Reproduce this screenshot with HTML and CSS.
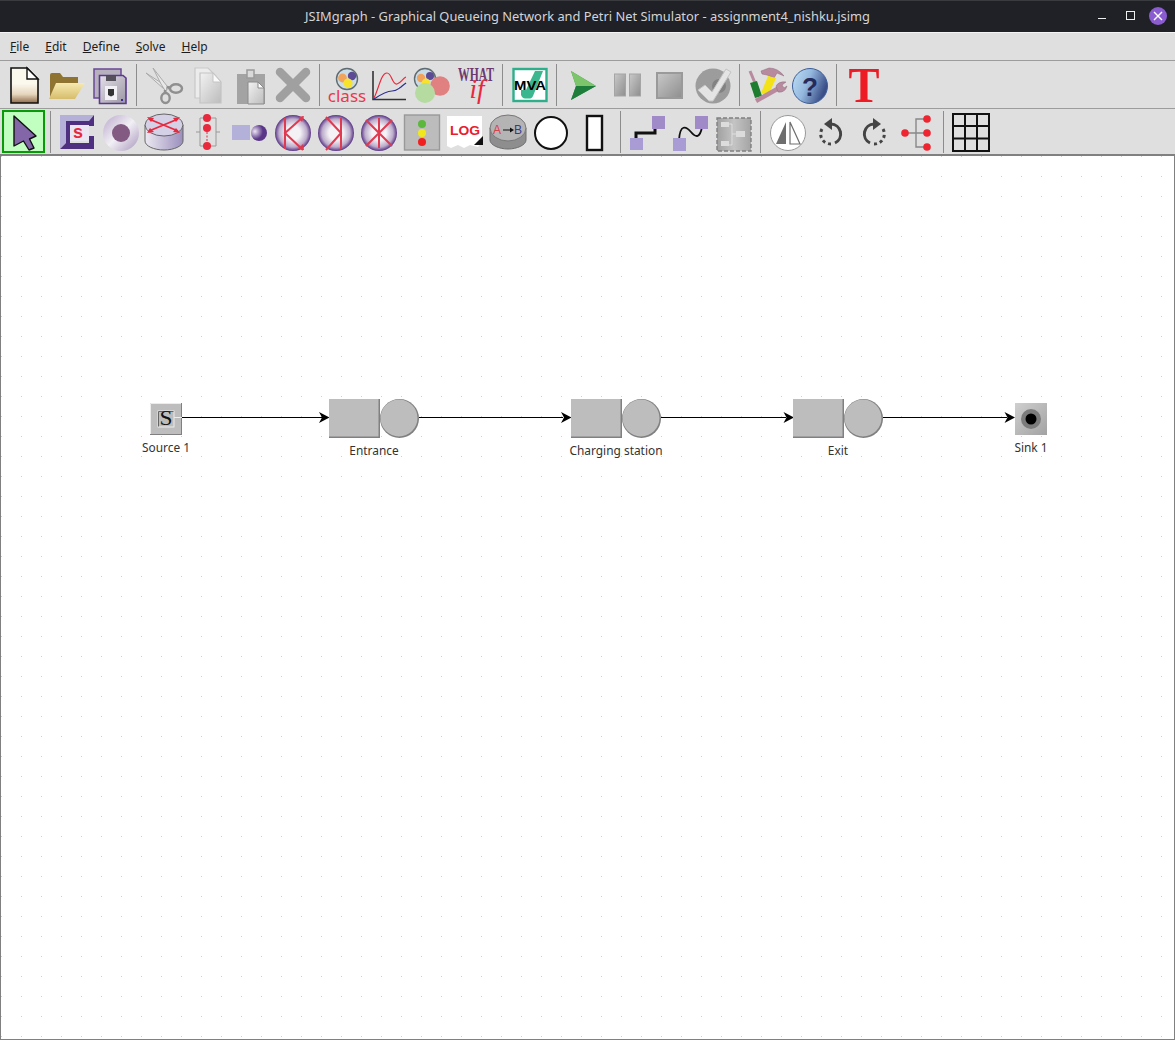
FILE: index.html
```html
<!DOCTYPE html>
<html lang="en">
<head>
  <meta charset="UTF-8">
  <title>JSIMgraph - Graphical Queueing Network and Petri Net Simulator</title>
  <link rel="stylesheet" href="styles.css">
</head>
<body>
<div class="window">
  <div class="titlebar">
    <span class="title">JSIMgraph - Graphical Queueing Network and Petri Net Simulator - assignment4_nishku.jsimg</span>
    <div class="controls">
      <svg width="14" height="14" viewBox="0 0 14 14"><path d="M2 9.500H10" stroke="#eee" stroke-width="1"/></svg>
      <svg width="14" height="14" viewBox="0 0 14 14"><rect x="2.500" y="2.500" width="8" height="8" fill="none" stroke="#eee"/></svg>
      <div class="close"><svg width="10" height="10" viewBox="0 0 10 10"><path d="M1 1L9 9M9 1L1 9" stroke="#fff" stroke-width="1.4"/></svg></div>
    </div>
  </div>

  <div class="menubar">
    <span class="menu"><u>F</u>ile</span>
    <span class="menu"><u>E</u>dit</span>
    <span class="menu"><u>D</u>efine</span>
    <span class="menu"><u>S</u>olve</span>
    <span class="menu"><u>H</u>elp</span>
  </div>

  <!-- main toolbar -->
  <div class="toolbar">
    <div class="tool"><svg width="40" height="40" viewBox="0 0 40 40">
      <defs>
        <linearGradient id="paper" x1="0" y1="0" x2="0" y2="1"><stop offset="0.45" stop-color="#fbf8ee"/><stop offset="0.75" stop-color="#e6d6bd"/><stop offset="1" stop-color="#8f6c4a"/></linearGradient>
        <linearGradient id="gold" x1="0" y1="0" x2="0" y2="1"><stop offset="0" stop-color="#f6eab0"/><stop offset="1" stop-color="#d6bd6c"/></linearGradient>
        <linearGradient id="greyfade" x1="0" y1="0" x2="1" y2="1"><stop offset="0" stop-color="#f2f2f2"/><stop offset="1" stop-color="#bcbcbc"/></linearGradient>
        <linearGradient id="greyflat" x1="0" y1="0" x2="1" y2="1"><stop offset="0" stop-color="#c9c9c9"/><stop offset="1" stop-color="#8e8e8e"/></linearGradient>
        <linearGradient id="floppy" x1="0" y1="0" x2="1" y2="1"><stop offset="0" stop-color="#e4e0ea"/><stop offset="1" stop-color="#9a95a2"/></linearGradient>
        <linearGradient id="help" x1="0" y1="0" x2="1" y2="0.4"><stop offset="0" stop-color="#c0e0f6"/><stop offset="0.5" stop-color="#94b8de"/><stop offset="1" stop-color="#3a4f88"/></linearGradient>
        <linearGradient id="ring" x1="0" y1="0" x2="1" y2="1"><stop offset="0" stop-color="#b9a8cc"/><stop offset="0.5" stop-color="#f2eff5"/><stop offset="1" stop-color="#a896bc"/></linearGradient>
        <linearGradient id="drum" x1="0" y1="0" x2="1" y2="0"><stop offset="0" stop-color="#ece9f2"/><stop offset="1" stop-color="#9b8fbc"/></linearGradient>
        <linearGradient id="block" x1="0" y1="0" x2="1" y2="0"><stop offset="0" stop-color="#a0a0a0"/><stop offset="0.5" stop-color="#c4c4c4"/><stop offset="1" stop-color="#a4a4a4"/></linearGradient>
        <linearGradient id="sinkbox" x1="0" y1="0" x2="1" y2="1"><stop offset="0" stop-color="#cfcfcf"/><stop offset="1" stop-color="#a2a2a2"/></linearGradient>
        <radialGradient id="orb"><stop offset="0.4" stop-color="#f4f2f5"/><stop offset="0.78" stop-color="#bcaccb"/><stop offset="1" stop-color="#5a3585"/></radialGradient>
        <radialGradient id="ball" cx="0.25" cy="0.4"><stop offset="0" stop-color="#ece6f2"/><stop offset="1" stop-color="#5a3688"/></radialGradient>
        <pattern id="dots" x="1" y="156" width="20" height="20" patternUnits="userSpaceOnUse"><rect width="1" height="1" fill="#cfcfcf"/></pattern>
      </defs>
      <path d="M7 3H23L34 14V38H7Z" fill="url(#paper)" stroke="#111" stroke-width="1.6"/>
      <path d="M23 3V14H34Z" fill="#fff" stroke="#111" stroke-width="1.4"/>
    </svg></div>
    <div class="tool"><svg width="40" height="40" viewBox="0 0 40 40">
      <path d="M3 34L3 10Q3 8 5 8H13L16 12H31V20H10Z" fill="#8f7431"/>
      <path d="M9 18H38L28 34H2Z" fill="url(#gold)"/>
    </svg></div>
    <div class="tool"><svg width="40" height="40" viewBox="0 0 40 40">
      <path d="M4 4H31V33H4Z" fill="#b6b1bd" stroke="#6a4896" stroke-width="1.5"/>
      <path d="M9.500 10.500H33L36 13V38.500H9.500Z" fill="url(#floppy)" stroke="#5a3a8c" stroke-width="1.6"/>
      <rect x="16" y="11" width="10" height="5" fill="#55505a"/>
      <rect x="15" y="21" width="12" height="14" fill="#f2f0f4"/>
      <path d="M18 24H24V30L21 31.500L18 30Z" fill="#333"/>
      <rect x="31" y="34" width="2" height="2" fill="#3c2a96"/>
    </svg></div>
    <div class="sep"></div>
    <div class="tool"><svg width="40" height="40" viewBox="0 0 40 40">
      <path d="M2 8L22 21L25 24L20 24Z" fill="#e8e8e8" stroke="#aaa"/>
      <path d="M9 3L23 21L22 27L17 19Z" fill="#e8e8e8" stroke="#aaa"/>
      <path d="M23 22L27 23M21 25L21 29" stroke="#8f8f8f" stroke-width="2.4"/>
      <ellipse cx="32" cy="23.500" rx="6" ry="4.300" fill="none" stroke="#8f8f8f" stroke-width="2.400"/>
      <ellipse cx="21.500" cy="33" rx="4.200" ry="5" fill="none" stroke="#8f8f8f" stroke-width="2.400"/>
    </svg></div>
    <div class="tool"><svg width="40" height="40" viewBox="0 0 40 40">
      <path d="M8 3H21L29 11V33H8Z" fill="#ececec" stroke="#c9c9c9" stroke-width="1.2"/>
      <path d="M13 8H26L34 17V38H13Z" fill="url(#greyfade)" stroke="#c4c4c4" stroke-width="1.2"/>
      <path d="M26 8V17H34Z" fill="#fafafa" stroke="#c4c4c4"/>
    </svg></div>
    <div class="tool"><svg width="40" height="40" viewBox="0 0 40 40">
      <rect x="7" y="9" width="28" height="30" fill="#a3a3a3"/>
      <rect x="17" y="5" width="7" height="8" fill="#d9d9d9" stroke="#9a9a9a" stroke-width="1.5"/>
      <path d="M18 17H28L34 23V39H18Z" fill="url(#greyfade)" stroke="#8a8a8a"/>
      <path d="M28 17V23H34Z" fill="#fff" stroke="#8a8a8a"/>
    </svg></div>
    <div class="tool"><svg width="40" height="40" viewBox="0 0 40 40">
      <path d="M7 7L33 33M33 7L7 33" stroke="#a0a0a0" stroke-width="8.500" stroke-linecap="round"/>
    </svg></div>
    <div class="sep"></div>
    <div class="tool"><svg width="40" height="40" viewBox="0 0 40 40">
      <circle cx="20" cy="14" r="10.500" fill="#c9dce6" stroke="#5e6b70" stroke-width="1.400"/>
      <circle cx="15.500" cy="13" r="4.400" fill="#f2a35b"/>
      <circle cx="25" cy="11" r="4.200" fill="#5d4a94"/>
      <circle cx="21" cy="18" r="4.600" fill="#f7e22c"/>
      <text x="20" y="37" class="tx-class">class</text>
    </svg></div>
    <div class="tool"><svg width="40" height="40" viewBox="0 0 40 40">
      <path d="M3 6V34.500H36" fill="none" stroke="#333" stroke-width="1.600"/>
      <path d="M4 33C9 23 11 8 17 8C22 8 22 20 27 19C31 18 33 13 36 12" fill="none" stroke="#e8283c" stroke-width="1.200"/>
      <path d="M4 34C13 28 18 26 22 26C27 26 28 24 31 22C33 20 35 19 36 18" fill="none" stroke="#2c2f8c" stroke-width="1.200"/>
    </svg></div>
    <div class="tool"><svg width="40" height="40" viewBox="0 0 40 40">
      <circle cx="12" cy="14" r="10.500" fill="#c9dce6" stroke="#5e6b70" stroke-width="1.400"/>
      <circle cx="8" cy="13" r="4.200" fill="#f2a35b"/>
      <circle cx="17" cy="11" r="4" fill="#5d4a94"/>
      <circle cx="13" cy="18" r="4.400" fill="#f7e22c"/>
      <circle cx="27" cy="21" r="9.800" fill="#e08080"/>
      <circle cx="12" cy="28" r="10" fill="#b5dba0"/>
    </svg></div>
    <div class="tool"><svg width="40" height="40" viewBox="0 0 40 40">
      <text x="20" y="16" class="tx-what" textLength="36" lengthAdjust="spacingAndGlyphs">WHAT</text>
      <text x="21" y="33" class="tx-if">if</text>
    </svg></div>
    <div class="sep"></div>
    <div class="tool"><svg width="40" height="40" viewBox="0 0 40 40">
      <rect x="3.500" y="4" width="33" height="32" fill="#fff" stroke="#2fae8c" stroke-width="2.400"/>
      <path d="M11 25H16L25 6H33L23 31C22 33 21 33.500 19 33.500H15C13 33.500 12 32 11 30Z" fill="#3bb78f"/>
      <text x="20" y="25" class="tx-mva" textLength="32" lengthAdjust="spacingAndGlyphs">MVA</text>
    </svg></div>
    <div class="sep"></div>
    <div class="tool"><svg width="40" height="40" viewBox="0 0 40 40">
      <path d="M7 6L32 21L7 35L12 21Z" fill="#2f9a4c"/>
      <path d="M7 6L32 21H12Z" fill="#7cc56a"/>
      <path d="M7 35L12 21H32Z" fill="#1f7d3c"/>
    </svg></div>
    <div class="tool"><svg width="40" height="40" viewBox="0 0 40 40">
      <rect x="7.500" y="9" width="11" height="22" fill="url(#greyflat)" stroke="#a5a5a5"/>
      <rect x="22.500" y="9" width="11" height="22" fill="url(#greyflat)" stroke="#a5a5a5"/>
    </svg></div>
    <div class="tool"><svg width="40" height="40" viewBox="0 0 40 40">
      <rect x="7" y="8" width="25" height="25" fill="url(#greyflat)" stroke="#9a9a9a" stroke-width="2"/>
    </svg></div>
    <div class="tool"><svg width="40" height="40" viewBox="0 0 40 40">
      <circle cx="20" cy="21" r="17.500" fill="#9c9c9c"/>
      <circle cx="26" cy="21" r="7" fill="#828282"/>
      <path d="M5 25L12 20L19 27L33 4L38 7L20 36H16Z" fill="#e4e4e4" stroke="#c4c4c4"/>
    </svg></div>
    <div class="sep"></div>
    <div class="tool"><svg width="40" height="40" viewBox="0 0 40 40">
      <path d="M3 6L8 18" stroke="#b88a9e" stroke-width="3"/>
      <path d="M3 18L10 16L15 31L8 33Z" fill="#1e7d2e"/>
      <path d="M14 6L22 3Q31 3 37 11L30 8L27 13L20 10L15 9Z" fill="#b88a9e" stroke="#8c6a7e" stroke-width="0.500"/>
      <path d="M21 11L29 13L21 31L14 28Z" fill="#f4e218"/>
      <path d="M9 36L32 23" stroke="#b88a9e" stroke-width="4.500"/>
      <path d="M29 21Q32 16 39 17L35 20L37 23L40 21Q38 28 31 27Z" fill="#b88a9e" stroke="#8c6a7e" stroke-width="0.500"/>
    </svg></div>
    <div class="tool"><svg width="40" height="40" viewBox="0 0 40 40">
      <circle cx="20" cy="21" r="17.500" fill="url(#help)" stroke="#3c5f9a" stroke-width="1"/>
      <text x="20" y="31" class="tx-help">?</text>
    </svg></div>
    <div class="sep"></div>
    <div class="tool"><svg width="40" height="40" viewBox="0 0 40 40">
      <text x="20" y="37" class="tx-t" textLength="31" lengthAdjust="spacingAndGlyphs">T</text>
    </svg></div>
  </div>

  <!-- element toolbar -->
  <div class="toolbar second">
    <div class="tool selected"><svg width="40" height="40" viewBox="0 0 40 40">
      <path d="M10 4L32 24L25.500 27L30 36L25 38L19.500 29L10 34Z" fill="#8266a8" stroke="#111" stroke-width="1.400" stroke-linejoin="round"/>
    </svg></div>
    <div class="sep"></div>
    <div class="tool"><svg width="40" height="40" viewBox="0 0 40 40">
      <path d="M2 3H36L31 9H8V31L2 37Z" fill="#b5b0d8"/>
      <path d="M2 37L8 31H31V24H36V37ZM31 9L36 3V14H31Z" fill="#4e2f80"/>
      <path d="M8 9H31V13H12V31H8Z" fill="#4e2f80"/>
      <rect x="12" y="13" width="19" height="16" fill="#e9e6f2"/>
      <rect x="31" y="14" width="5" height="10" fill="#dfdfdf"/>
      <text x="20" y="26" class="tx-s">s</text>
    </svg></div>
    <div class="tool"><svg width="40" height="40" viewBox="0 0 40 40">
      <circle cx="20" cy="21" r="18" fill="url(#ring)"/>
      <circle cx="20" cy="21" r="9" fill="#825a82"/>
    </svg></div>
    <div class="tool"><svg width="40" height="40" viewBox="0 0 40 40">
      <path d="M1 13V29C1 34 10 38 20 38C30 38 39 34 39 29V13Z" fill="url(#drum)" stroke="#666"/>
      <ellipse cx="20" cy="13" rx="19" ry="11" fill="#d4d0e6" stroke="#666"/>
      <path d="M5 7L34 19M5 19L34 7" stroke="#e8283c" stroke-width="1.800"/>
      <path d="M3 5L10 6L7 10ZM36 21L29 20L32 16ZM3 21L6 16L10 20ZM36 5L29 6L32 10Z" fill="#e8283c"/>
    </svg></div>
    <div class="tool"><svg width="40" height="40" viewBox="0 0 40 40">
      <path d="M17 6H13V34H17M23 6H29V34H23M13 20H9M29 20H33" fill="none" stroke="#999" stroke-width="1"/>
      <path d="M20 20V30" stroke="#e8283c" stroke-dasharray="2 1.500"/>
      <circle cx="20" cy="6" r="4" fill="#e8283c"/>
      <circle cx="20" cy="16" r="4" fill="#e8283c"/>
      <circle cx="20" cy="34" r="4" fill="#e8283c"/>
    </svg></div>
    <div class="tool"><svg width="40" height="40" viewBox="0 0 40 40">
      <rect x="2" y="13" width="18" height="15" fill="#b3b0da"/>
      <circle cx="29" cy="21" r="8" fill="url(#ball)"/>
    </svg></div>
    <div class="tool"><svg width="40" height="40" viewBox="0 0 40 40">
      <circle cx="20" cy="21" r="18" fill="url(#orb)"/>
      <path d="M12 6V37M30 5L12 21L30 38" fill="none" stroke="#e03a50" stroke-width="2"/>
      <path d="M25 5L31 4L29 10ZM25 37L31 38L30 32Z" fill="#e03a50"/>
    </svg></div>
    <div class="tool"><svg width="40" height="40" viewBox="0 0 40 40">
      <circle cx="20" cy="21" r="18" fill="url(#orb)"/>
      <path d="M25 6V37M10 5L25 21L10 38" fill="none" stroke="#e03a50" stroke-width="2"/>
    </svg></div>
    <div class="tool"><svg width="40" height="40" viewBox="0 0 40 40">
      <circle cx="20" cy="21" r="18" fill="url(#orb)"/>
      <path d="M7 8L33 34M33 8L7 34M20 6V36" stroke="#e03a50" stroke-width="2"/>
    </svg></div>
    <div class="tool"><svg width="40" height="40" viewBox="0 0 40 40">
      <rect x="2.500" y="3" width="35" height="35" fill="#bcbcbc" stroke="#999" stroke-width="1.400"/>
      <circle cx="20" cy="12" r="4" fill="#5cb83c"/>
      <circle cx="20" cy="21" r="4" fill="#f0e81c"/>
      <circle cx="20" cy="30" r="4" fill="#f02020"/>
    </svg></div>
    <div class="tool"><svg width="40" height="40" viewBox="0 0 40 40">
      <path d="M2 4H37V30L33 35L25 33L19 36L13 33L6 36L2 34Z" fill="#fff"/>
      <text x="20" y="23" class="tx-log" textLength="30" lengthAdjust="spacingAndGlyphs">LOG</text>
      <path d="M38 24V33H29Z" fill="#111"/>
    </svg></div>
    <div class="tool"><svg width="40" height="40" viewBox="0 0 40 40">
      <path d="M2 16V28C2 33 11 37 20 37C29 37 38 33 38 28V16Z" fill="#8e8e8e" stroke="#6e6e6e"/>
      <ellipse cx="20" cy="16" rx="18" ry="13" fill="#b4b4b4" stroke="#777"/>
      <text x="9" y="22" class="tx-a">A</text>
      <path d="M15 18H24" stroke="#111"/>
      <path d="M26 18L22 15.500V20.500Z" fill="#111"/>
      <text x="26" y="22" class="tx-b">B</text>
    </svg></div>
    <div class="tool"><svg width="40" height="40" viewBox="0 0 40 40">
      <circle cx="20" cy="21" r="16" fill="#fff" stroke="#111" stroke-width="2"/>
    </svg></div>
    <div class="tool"><svg width="40" height="40" viewBox="0 0 40 40">
      <rect x="13" y="4" width="15" height="34" fill="#fff" stroke="#111" stroke-width="2.400"/>
    </svg></div>
    <div class="sep"></div>
    <div class="tool"><svg width="40" height="40" viewBox="0 0 40 40">
      <path d="M8 28V21H27V14" fill="none" stroke="#111" stroke-width="3"/>
      <rect x="24" y="4" width="13" height="13" fill="#a08ac8"/>
      <rect x="2" y="26" width="13" height="12" fill="#a99bd4"/>
    </svg></div>
    <div class="tool"><svg width="40" height="40" viewBox="0 0 40 40">
      <path d="M8 28C9 12 15 14 20 20S29 26 31 15" fill="none" stroke="#111" stroke-width="1.800"/>
      <rect x="24" y="4" width="13" height="13" fill="#a08ac8"/>
      <rect x="2" y="26" width="13" height="13" fill="#a99bd4"/>
    </svg></div>
    <div class="tool"><svg width="40" height="40" viewBox="0 0 40 40">
      <rect x="3" y="6" width="34" height="33" fill="url(#block)" stroke="#808080" stroke-width="1.400" stroke-dasharray="4 2"/>
      <path d="M12 12H18V33H12M18 22H24" fill="none" stroke="#e4e4e4" stroke-width="0.800"/>
      <rect x="7" y="10" width="8" height="5" fill="#dcdcdc"/>
      <rect x="7" y="29" width="8" height="5" fill="#dcdcdc"/>
      <rect x="22" y="19" width="9" height="6" fill="#dcdcdc"/>
    </svg></div>
    <div class="sep"></div>
    <div class="tool"><svg width="40" height="40" viewBox="0 0 40 40">
      <circle cx="20" cy="21" r="17.500" fill="#fff" stroke="#999" stroke-width="1"/>
      <path d="M18 10V32H8Z" fill="#6e6e6e"/>
      <path d="M22 10V32H32Z" fill="#fff" stroke="#6e6e6e" stroke-width="1.200"/>
    </svg></div>
    <div class="tool"><svg width="40" height="40" viewBox="0 0 40 40">
      <path d="M20 32A10 10 0 0 1 11 17" fill="none" stroke="#444" stroke-width="3" stroke-dasharray="3 3"/>
      <path d="M20 12A10 10 0 0 1 24 31" fill="none" stroke="#444" stroke-width="3"/>
      <path d="M21 6V18L13 12Z" fill="#444"/>
    </svg></div>
    <div class="tool"><svg width="40" height="40" viewBox="0 0 40 40">
      <path d="M20 32A10 10 0 0 0 29 17" fill="none" stroke="#444" stroke-width="3" stroke-dasharray="3 3"/>
      <path d="M20 12A10 10 0 0 0 16 31" fill="none" stroke="#444" stroke-width="3"/>
      <path d="M19 6V18L27 12Z" fill="#444"/>
    </svg></div>
    <div class="tool"><svg width="40" height="40" viewBox="0 0 40 40">
      <path d="M8 21H30M30 7H19V35H30" fill="none" stroke="#888" stroke-width="1.400"/>
      <circle cx="8" cy="21" r="3.800" fill="#ee2530"/>
      <circle cx="30" cy="7" r="3.800" fill="#ee2530"/>
      <circle cx="30" cy="21" r="3.800" fill="#ee2530"/>
      <circle cx="30" cy="35" r="3.800" fill="#ee2530"/>
    </svg></div>
    <div class="sep"></div>
    <div class="tool"><svg width="40" height="40" viewBox="0 0 40 40">
      <path d="M2 2H38V39H2ZM14 2V39M26 2V39M2 14H38M2 26.500H38" fill="none" stroke="#111" stroke-width="2"/>
    </svg></div>
  </div>

  <div class="canvas">
    <svg class="diagram" viewBox="1 156 1173 882" width="1173" height="882">
      <rect x="1" y="156" width="1173" height="882" fill="url(#dots)"/>

      <g class="link">
        <path d="M182 417.500H322"/>
        <path d="M419 417.500H563"/>
        <path d="M661 417.500H786"/>
        <path d="M883 417.500H1007"/>
      </g>
      <path class="head" d="M319 412L329.500 417.500L319 423L322 417.500Z"/>
      <path class="head" d="M561 412L571.500 417.500L561 423L564 417.500Z"/>
      <path class="head" d="M783.500 412L794 417.500L783.500 423L786.500 417.500Z"/>
      <path class="head" d="M1004.500 412L1015 417.500L1004.500 423L1007.500 417.500Z"/>

      <!-- source -->
      <rect x="150" y="403" width="32" height="32" class="edge"/>
      <rect x="150" y="403" width="31" height="31" class="face"/>
      <path d="M150.500 434V403.500H181" class="hi"/>
      <rect x="158" y="411" width="16" height="16" class="hi"/>
      <path d="M158.500 426.500V411.500H173.500" class="lo"/>
      <text x="166" y="425" class="tx-node" textLength="13" lengthAdjust="spacingAndGlyphs">S</text>
      <path d="M174 417.500H182" class="hi"/>
      <text x="166" y="452" class="label">Source 1</text>

      <!-- stations -->
      <rect x="329" y="399" width="51" height="39" class="edge"/>
      <rect x="329" y="399" width="49.500" height="37.500" class="face"/>
      <circle cx="399.500" cy="418.500" r="19.500" class="edge"/>
      <circle cx="399" cy="418" r="18.500" class="face"/>
      <text x="374" y="455" class="label">Entrance</text>

      <rect x="571" y="399" width="51" height="39" class="edge"/>
      <rect x="571" y="399" width="49.500" height="37.500" class="face"/>
      <circle cx="641.500" cy="418.500" r="19.500" class="edge"/>
      <circle cx="641" cy="418" r="18.500" class="face"/>
      <text x="616" y="455" class="label">Charging station</text>

      <rect x="793" y="399" width="51" height="39" class="edge"/>
      <rect x="793" y="399" width="49.500" height="37.500" class="face"/>
      <circle cx="863.500" cy="418.500" r="19.500" class="edge"/>
      <circle cx="863" cy="418" r="18.500" class="face"/>
      <text x="838" y="455" class="label">Exit</text>

      <!-- sink -->
      <rect x="1015" y="403" width="32" height="32" fill="url(#sinkbox)"/>
      <circle cx="1031" cy="419" r="10" fill="#7c7c7c"/>
      <circle cx="1031" cy="419" r="5.500" fill="#000"/>
      <text x="1031" y="452" class="label">Sink 1</text>
    </svg>
  </div>
</div>
</body>
</html>
```

FILE: styles.css
```css
html, body {
  margin: 0;
  padding: 0;
  height: 100%;
}

body {
  background: #202126;
  font-family: "Noto Sans", sans-serif;
  overflow: hidden;
}

.window {
  height: 1040px;
  display: flex;
  flex-direction: column;
}

/* title bar */
.titlebar {
  height: 32px;
  flex: none;
  background: #202126;
  border-top: 1px solid #3a3b3f;
  box-sizing: border-box;
  padding-bottom: 2px;
  display: flex;
  align-items: center;
  justify-content: center;
  position: relative;
}

.title {
  color: #d4d4d6;
  font-size: 12.87px;
}

.controls {
  position: absolute;
  right: 8px;
  top: 6px;
  display: flex;
  align-items: center;
  gap: 14px;
}

.close {
  width: 18px;
  height: 18px;
  margin-left: -3px;
  border-radius: 50%;
  background: #8a5cd0;
  display: flex;
  align-items: center;
  justify-content: center;
}

/* menu */
.menubar {
  height: 28px;
  flex: none;
  background: #dfdfdf;
  border-top: 1px solid #f4f4f4;
  box-sizing: border-box;
  display: flex;
  align-items: center;
  gap: 16px;
  padding: 0 10px;
}

.menu {
  font-size: 12px;
  color: #1c1c1c;
}

/* toolbars */
.toolbar {
  height: 48px;
  flex: none;
  background: #dfdfdf;
  border-top: 1px solid #9c9c9c;
  box-sizing: border-box;
  display: flex;
  align-items: center;
  padding-left: 2px;
}

.toolbar.second {
  height: 46px;
}

.tool {
  width: 43px;
  height: 43px;
  flex: none;
  box-sizing: border-box;
  display: flex;
  align-items: center;
  justify-content: center;
}

.tool svg {
  overflow: visible;
}

.tool.selected {
  background: #c0ffc0;
  border: 2px solid #089a08;
}

.sep {
  width: 11px;
  height: 42px;
  flex: none;
  display: flex;
  justify-content: center;
}

.sep::before {
  content: "";
  width: 1px;
  background: #8c8c8c;
}

/* icon text */
.tx-class {
  font-family: "Noto Sans", sans-serif;
  font-size: 17px;
  fill: #e8394a;
  text-anchor: middle;
}

.tx-what {
  font-family: "Liberation Serif", serif;
  font-weight: bold;
  font-size: 18px;
  fill: #6b3a72;
  text-anchor: middle;
}

.tx-if {
  font-family: "Liberation Serif", serif;
  font-style: italic;
  font-size: 27px;
  fill: #e8283c;
  text-anchor: middle;
}

.tx-mva {
  font-family: "Liberation Sans", sans-serif;
  font-weight: bold;
  font-size: 13px;
  fill: #000;
  text-anchor: middle;
}

.tx-help {
  font-family: "Liberation Sans", sans-serif;
  font-weight: bold;
  font-size: 26px;
  fill: #232a5c;
  text-anchor: middle;
}

.tx-t {
  font-family: "Liberation Serif", serif;
  font-weight: bold;
  font-size: 50px;
  fill: #ed1c24;
  text-anchor: middle;
}

.tx-s {
  font-family: "Liberation Sans", sans-serif;
  font-weight: bold;
  font-size: 18px;
  fill: #e8283c;
  text-anchor: middle;
}

.tx-log {
  font-family: "Liberation Sans", sans-serif;
  font-weight: bold;
  font-size: 13px;
  fill: #e8202c;
  text-anchor: middle;
}

.tx-a {
  font-family: "Liberation Sans", sans-serif;
  font-size: 12px;
  fill: #d8404a;
  text-anchor: middle;
}

.tx-b {
  font-family: "Liberation Sans", sans-serif;
  font-size: 12px;
  fill: #3a3a8a;
  text-anchor: start;
}

/* drawing area */
.canvas {
  flex: 1;
  background: #fff;
  border-top: 2px solid #808080;
  border-left: 1px solid #808080;
  border-right: 1px solid #808080;
  border-bottom: 1px solid #808080;
  overflow: hidden;
}

.diagram {
  display: block;
}

.link path {
  stroke: #000;
  stroke-width: 1.200;
  fill: none;
}

.head {
  fill: #000;
}

.face {
  fill: #bdbdbd;
}

.edge {
  fill: #808080;
}

.hi {
  fill: none;
  stroke: #ececec;
}

.lo {
  fill: none;
  stroke: #666;
}

.tx-node {
  font-family: "Liberation Serif", serif;
  font-size: 20px;
  fill: #111;
  text-anchor: middle;
}

.label {
  font-family: "Noto Sans", sans-serif;
  font-size: 11.9px;
  fill: #333;
  text-anchor: middle;
}
```
